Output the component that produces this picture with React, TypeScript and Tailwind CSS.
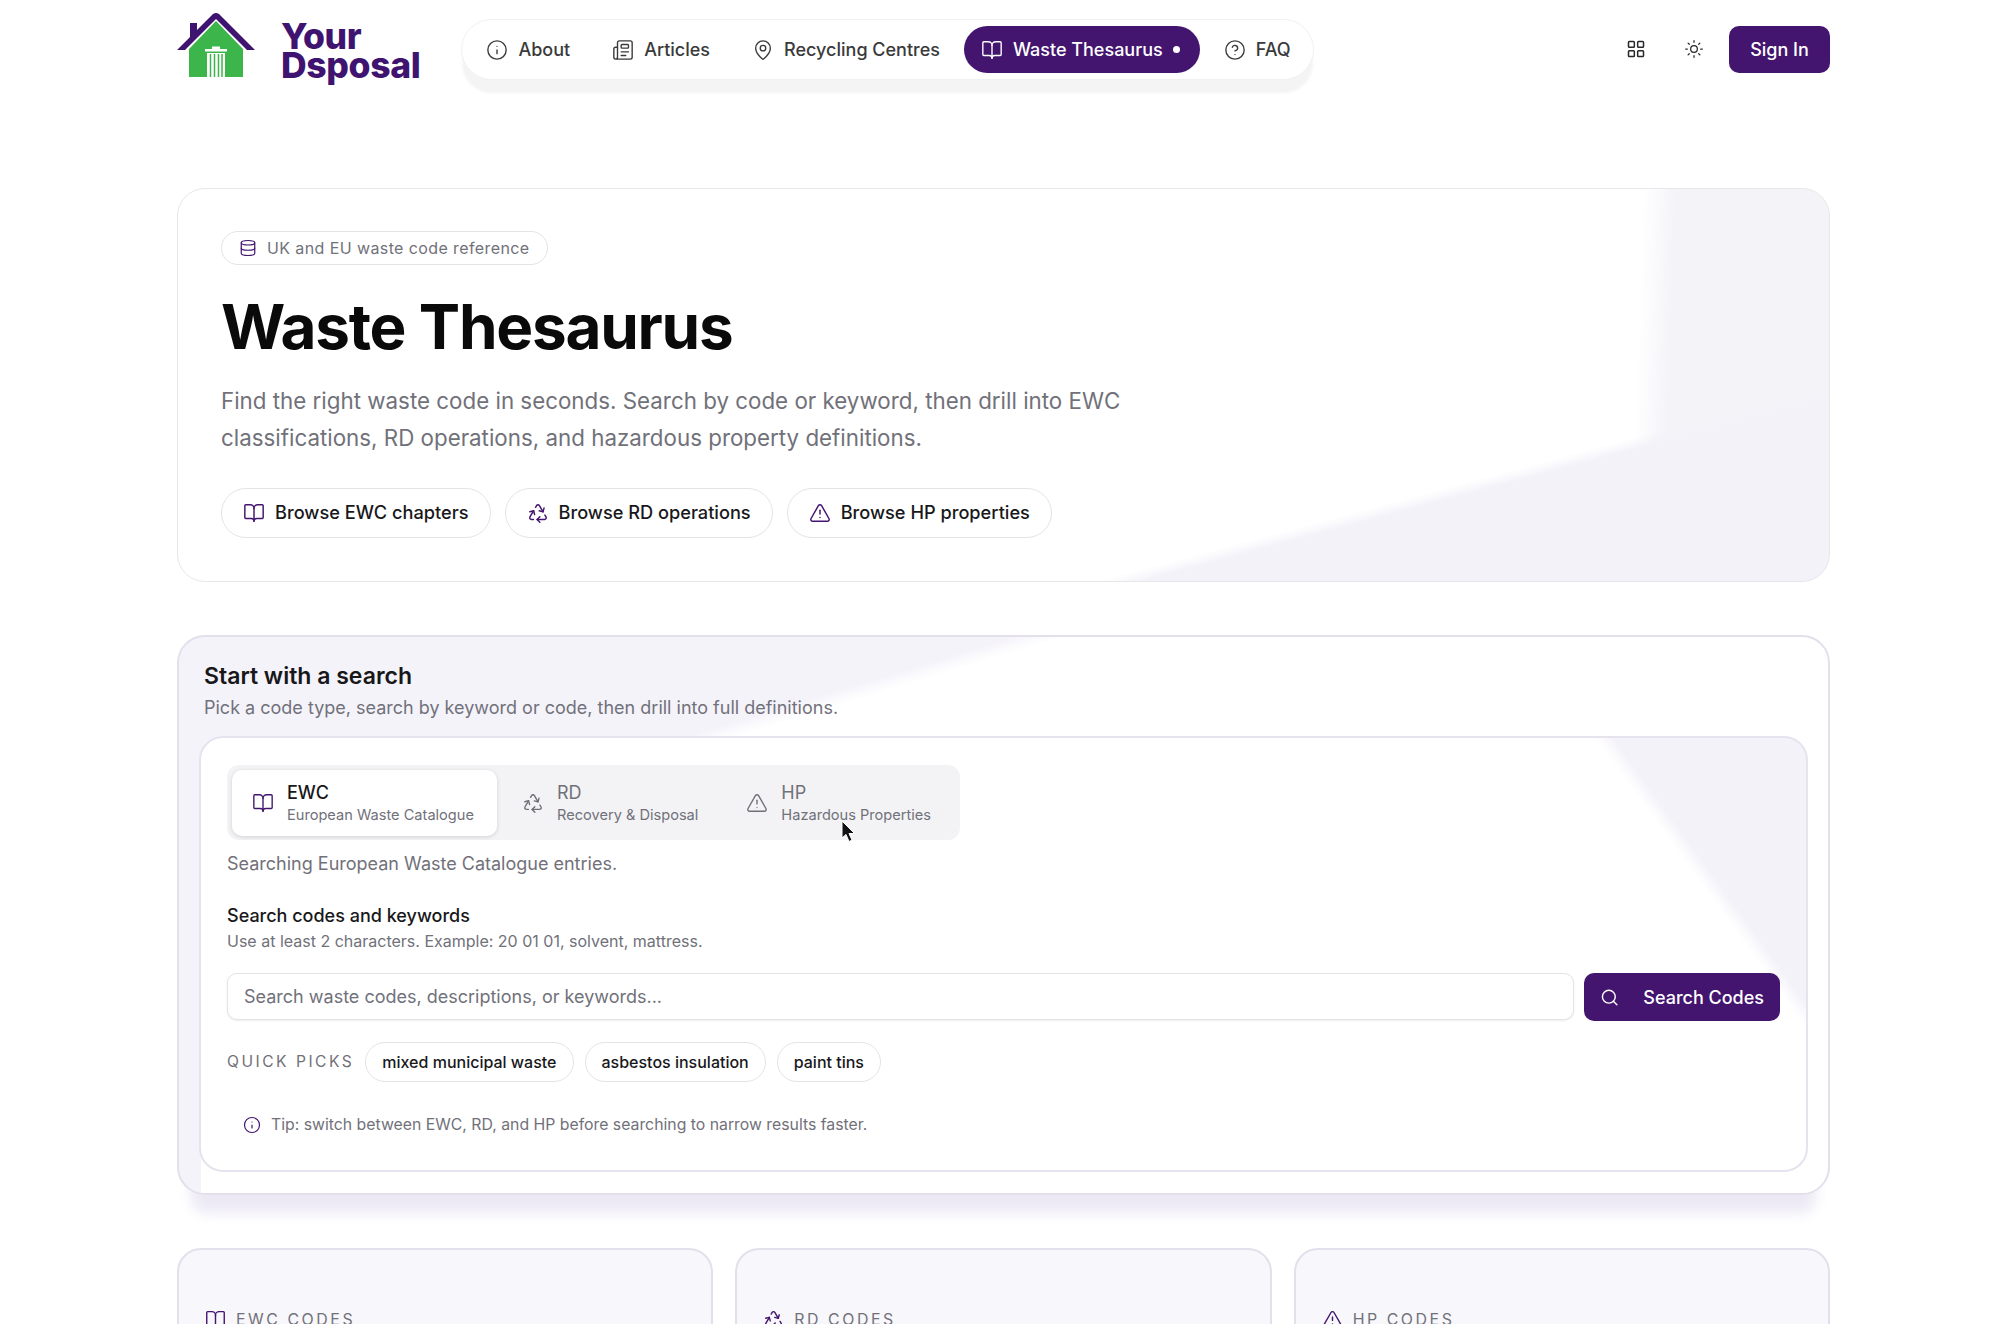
import React from "react";
import {
  Info,
  Newspaper,
  MapPin,
  BookOpen,
  CircleHelp,
  LayoutGrid,
  Sun,
  Database,
  Recycle,
  TriangleAlert,
  Search,
} from "lucide-react";

const Logo = () => (
  <div className="flex items-center gap-[24px] shrink-0">
    <svg width="80" height="66" viewBox="0 0 80 66" className="shrink-0 mb-[6px]">
      <path d="M12 36 L39 8 L66 36 V64 H12 Z" fill="#3cb54a" />
      <path
        d="M0 37 L13 24 V10 H20 V17 L36 1 Q39 -1 42 1 L78 37 H70 L39 6 L8 37 Z"
        fill="#3f1470"
      />
      <rect x="28" y="36" width="22" height="2.5" fill="#fff" />
      <rect x="35" y="33.5" width="8" height="2.5" fill="#fff" />
      <path d="M30 40 H48 V64 H30 Z" fill="#fff" />
      <path d="M33.5 41 V64 M37.5 41 V64 M41.5 41 V64 M45 41 V64" stroke="#3cb54a" strokeWidth="1.5" />
    </svg>
    <div className="text-[35.5px] leading-[29px] font-extrabold tracking-[-0.01em] text-[#3f1470] mt-[4px]">
      <div>Your</div>
      <div>Dsposal</div>
    </div>
  </div>
);

const NavLink = ({
  icon: Icon,
  label,
  offset,
}: {
  icon: React.ElementType;
  label: string;
  offset?: boolean;
}) => (
  <a
    className={
      offset
        ? "flex items-center gap-[10px] h-[47px] ml-[6px] px-[12px] text-[18px] font-medium whitespace-nowrap text-[#3a3a3a]"
        : "flex items-center gap-[10px] h-[47px] px-[12px] text-[18px] font-medium whitespace-nowrap text-[#3a3a3a]"
    }
  >
    <Icon size={22} strokeWidth={1.5} />
    {label}
  </a>
);

const Pill = ({ icon: Icon, label }: { icon: React.ElementType; label: string }) => (
  <button className="flex items-center gap-[10px] h-[50px] px-[21px] rounded-full border border-[#e4e4e7] bg-white text-[18.2px] font-medium whitespace-nowrap text-[#18181b]">
    <Icon size={22} strokeWidth={1.6} className="text-[#43156f]" />
    {label}
  </button>
);

const Tab = ({
  icon: Icon,
  code,
  sub,
  active,
}: {
  icon: React.ElementType;
  code: string;
  sub: string;
  active?: boolean;
}) => (
  <div
    className={
      active
        ? "flex items-center gap-[13px] h-[66px] w-[265px] px-[20px] rounded-[10px] bg-white shadow-[0_1px_4px_rgba(0,0,0,0.14)]"
        : "flex items-center gap-[13px] h-[66px] pl-[23px] pr-[23px] rounded-[10px]"
    }
  >
    <Icon size={22} strokeWidth={1.5} className={active ? "text-[#43156f]" : "text-[#6f6f76]"} />
    <div>
      <div
        className={
          active
            ? "text-[18px] leading-[24px] font-medium text-[#18181b]"
            : "text-[18px] leading-[24px] text-[#71717a]"
        }
      >
        {code}
      </div>
      <div className="text-[14.6px] leading-[20px] whitespace-nowrap text-[#71717a]">{sub}</div>
    </div>
  </div>
);

const Chip = ({ label }: { label: string }) => (
  <button className="h-[40px] px-[16px] rounded-full border border-[#e4e4e7] bg-white text-[16px] font-medium whitespace-nowrap text-[#18181b]">
    {label}
  </button>
);

const StatCard = ({ icon: Icon, label }: { icon: React.ElementType; label: string }) => (
  <div className="flex-1 h-[200px] rounded-[24px] border-2 border-[#e3e0ec] bg-[#f8f7fb] px-[26px] pt-[58px]">
    <div className="flex items-center gap-[10px] text-[15.9px] tracking-[0.16em] text-[#71717a]">
      <Icon size={21} strokeWidth={1.6} className="text-[#43156f]" />
      {label}
    </div>
  </div>
);

export default function App() {
  return (
    <div className="h-[1324px] overflow-hidden bg-white font-['Inter',sans-serif]">
      <div className="w-[1653px] ml-[177px]">
        {/* top bar */}
        <header className="flex items-center h-[98px]">
          <Logo />
          <nav className="flex items-center gap-[12px] ml-[41px] h-[61px] w-[853px] shrink-0 px-[12px] rounded-[32px] bg-white border border-[#f1f1f1] shadow-[0_14px_3px_-1px_#f4f4f4] mt-[1px]">
            <NavLink icon={Info} label="About" />
            <NavLink icon={Newspaper} label="Articles" offset />
            <NavLink icon={MapPin} label="Recycling Centres" offset />
            <a className="flex items-center gap-[10px] h-[47px] pl-[17px] pr-[20px] rounded-[24px] bg-[#43156f] text-[18px] font-medium whitespace-nowrap text-white">
              <BookOpen size={22} strokeWidth={1.5} />
              Waste Thesaurus
              <span className="w-[7px] h-[7px] rounded-full bg-white" />
            </a>
            <NavLink icon={CircleHelp} label="FAQ" />
          </nav>
          <div className="flex items-center ml-auto">
            <LayoutGrid size={20} strokeWidth={1.8} className="text-[#27272a] mr-[38px]" />
            <Sun size={20} strokeWidth={1.5} className="text-[#27272a] mr-[25px]" />
            <button className="h-[47px] w-[101px] rounded-[10px] bg-[#43156f] text-[18px] font-medium text-white">
              Sign In
            </button>
          </div>
        </header>

        {/* hero */}
        <section className="mt-[90px] h-[394px] rounded-[28px] border border-[#e7e7ea] bg-[linear-gradient(165deg,transparent_76.5%,#f4f2f9_78%),linear-gradient(92deg,#ffffff_88%,#f4f3f8_90%)] px-[43px] pt-[42px]">
          <div className="inline-flex items-center gap-[10px] h-[34px] px-[17px] rounded-full border border-[#e4e4e7] bg-white text-[16px] tracking-[0.025em] text-[#71717a]">
            <Database size={18} strokeWidth={1.6} className="text-[#43156f]" />
            UK and EU waste code reference
          </div>
          <h1 className="mt-[29px] text-[62px] leading-[66px] font-bold tracking-[-0.02em] text-[#0a0a0a]">
            Waste Thesaurus
          </h1>
          <p className="mt-[22px] w-[930px] text-[22.35px] leading-[37px] text-[#71717a]">
            Find the right waste code in seconds. Search by code or keyword, then drill into EWC classifications, RD
            operations, and hazardous property definitions.
          </p>
          <div className="flex gap-[14px] mt-[32px]">
            <Pill icon={BookOpen} label="Browse EWC chapters" />
            <Pill icon={Recycle} label="Browse RD operations" />
            <Pill icon={TriangleAlert} label="Browse HP properties" />
          </div>
        </section>

        {/* search */}
        <section className="mt-[53px] h-[560px] rounded-[28px] border-2 border-[#e3e0ec] bg-[linear-gradient(to_right,#f5f3fa_22px,transparent_22px),linear-gradient(163deg,#f5f3fa_24%,#ffffff_25.5%)] px-[20px] pt-[23px] shadow-[0_32px_14px_-14px_#ece9f4]">
          <h2 className="ml-[5px] text-[23px] leading-[32px] font-semibold text-[#18181b]">Start with a search</h2>
          <p className="ml-[5px] mt-[3px] text-[18px] leading-[26px] text-[#71717a]">
            Pick a code type, search by keyword or code, then drill into full definitions.
          </p>
          <div className="relative mt-[15px] h-[436px] rounded-[24px] border-2 border-[#e6e3ee] bg-[linear-gradient(54deg,#ffffff_89%,#f4f2f9_90%)] px-[26px] pt-[27px]">
            <div className="flex items-center gap-[2px] w-[733px] h-[75px] px-[5px] rounded-[12px] bg-[#f3f3f5]">
              <Tab icon={BookOpen} code="EWC" sub="European Waste Catalogue" active />
              <Tab icon={Recycle} code="RD" sub="Recovery & Disposal" />
              <Tab icon={TriangleAlert} code="HP" sub="Hazardous Properties" />
            </div>
            <p className="mt-[11px] text-[18px] leading-[26px] text-[#71717a]">
              Searching European Waste Catalogue entries.
            </p>
            <h3 className="mt-[26px] text-[18px] leading-[26px] font-medium text-[#18181b]">
              Search codes and keywords
            </h3>
            <p className="text-[16px] leading-[24px] text-[#71717a]">
              Use at least 2 characters. Example: 20 01 01, solvent, mattress.
            </p>
            <div className="flex gap-[10px] mt-[20px]">
              <div className="flex items-center flex-1 h-[47px] px-[16px] rounded-[10px] border border-[#e4e4e7] bg-white shadow-[0_1px_2px_rgba(0,0,0,0.08)] text-[18px] text-[#71717a]">
                Search waste codes, descriptions, or keywords...
              </div>
              <button className="flex items-center gap-[24px] h-[48px] w-[196px] px-[16px] rounded-[10px] bg-[#43156f] text-[18px] font-medium whitespace-nowrap text-white">
                <Search size={21} strokeWidth={1.8} />
                Search Codes
              </button>
            </div>
            <div className="flex items-center gap-[11px] mt-[21px]">
              <span className="text-[15.6px] tracking-[0.16em] text-[#71717a]">QUICK PICKS</span>
              <Chip label="mixed municipal waste" />
              <Chip label="asbestos insulation" />
              <Chip label="paint tins" />
            </div>
            <div className="flex items-center gap-[10px] mt-[31px] ml-[16px] text-[15.8px] text-[#71717a]">
              <Info size={18} strokeWidth={1.6} className="text-[#43156f]" />
              Tip: switch between EWC, RD, and HP before searching to narrow results faster.
            </div>
            {/* mouse pointer from the capture */}
            <svg width="16" height="24" viewBox="0 0 16 24" className="absolute left-[640px] top-[82px]">
              <path d="M1 1 V18 L5 14.5 L8 21.5 L11 20 L8 13.5 H13.5 Z" fill="#111" stroke="#fff" strokeWidth="1" />
            </svg>
          </div>
        </section>

        {/* stat cards */}
        <div className="flex gap-[22px] mt-[53px]">
          <StatCard icon={BookOpen} label="EWC CODES" />
          <StatCard icon={Recycle} label="RD CODES" />
          <StatCard icon={TriangleAlert} label="HP CODES" />
        </div>
      </div>
    </div>
  );
}
